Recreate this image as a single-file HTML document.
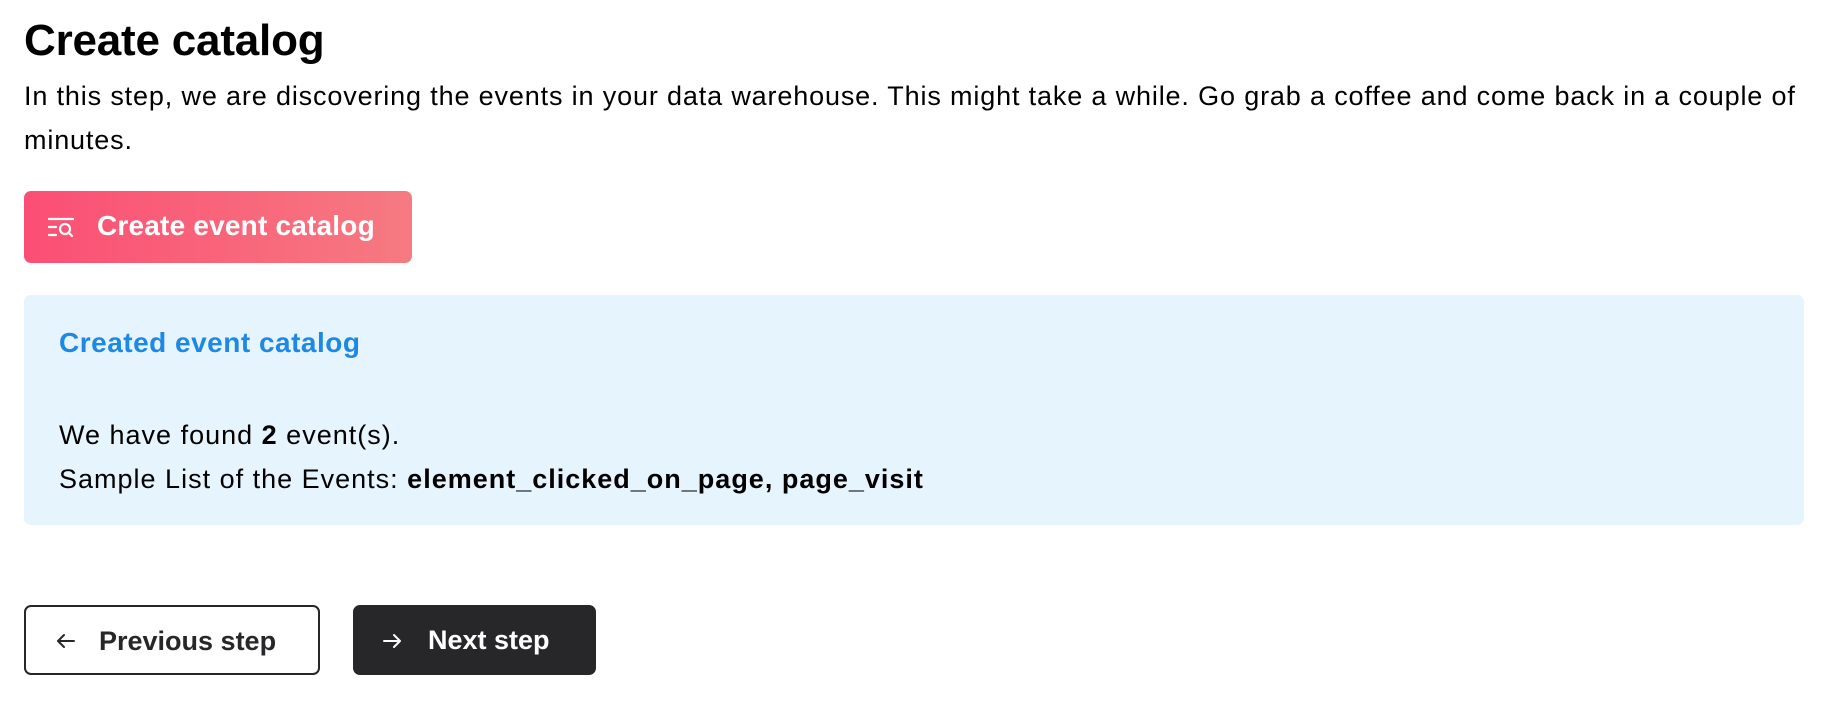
<!DOCTYPE html>
<html><head><meta charset="utf-8"><style>
*{box-sizing:border-box;margin:0;padding:0}
body{width:1848px;height:726px;background:#fff;font-family:"Liberation Sans",Arial,sans-serif;color:#000;position:relative;overflow:hidden}
.abs{position:absolute}
h1{position:absolute;left:24px;top:16px;font-size:44px;font-weight:bold;line-height:50px;letter-spacing:-0.2px}
.p{left:24px;top:74px;width:1800px;font-size:27px;line-height:44px;letter-spacing:0.85px}
.btn{position:absolute;border-radius:7px;display:flex;align-items:center;font-weight:bold;font-size:27px}
.create{left:24px;top:191px;width:388px;height:72px;background:linear-gradient(90deg,#fb4e74,#f67a81);color:#fff}
.box{left:24px;top:295px;width:1780px;height:230px;background:#e6f4fd;border-radius:7px}
.prev{left:24px;top:605px;width:296px;height:70px;border:2px solid #27272a;color:#27272a;background:#fff}
.next{left:353px;top:605px;width:243px;height:70px;background:#27272a;color:#fff}
</style></head><body>
<h1>Create catalog</h1>
<div class="abs p">In this step, we are discovering the events in your data warehouse. This might take a while. Go grab a coffee and come back in a couple of minutes.</div>
<div class="btn create">
<svg class="abs" style="left:24px;top:24px" width="28" height="26" viewBox="0 0 28 26" fill="none" stroke="#fff" stroke-width="2.2" stroke-linecap="round"><path d="M1 4H25M1 12H8M1 20H8"/><circle cx="17" cy="14" r="5"/><path d="M21 18L24 21"/></svg>
<span class="abs" style="left:73px;top:18px;line-height:34px;font-size:28px;letter-spacing:0.2px">Create event catalog</span></div>
<div class="abs box">
<div class="abs" style="left:35px;top:32px;font-size:28px;letter-spacing:0.5px;font-weight:bold;color:#1e88e5">Created event catalog</div>
<div class="abs" style="left:35px;top:118px;font-size:27px;letter-spacing:1px;line-height:44px;color:#000">We have found <b>2</b> event(s).<br>Sample List of the Events: <b>element_clicked_on_page, page_visit</b></div>
</div>
<div class="btn prev">
<svg class="abs" style="left:30px;top:26px" width="20" height="16" viewBox="0 0 20 16" fill="none" stroke="#27272a" stroke-width="2" stroke-linecap="round" stroke-linejoin="round"><path d="M18 8H2M8 2L2 8L8 14"/></svg>
<span class="abs" style="left:73px;top:17px;line-height:34px">Previous step</span></div>
<div class="btn next">
<svg class="abs" style="left:29px;top:28px" width="20" height="16" viewBox="0 0 20 16" fill="none" stroke="#fff" stroke-width="2" stroke-linecap="round" stroke-linejoin="round"><path d="M2 8H18M12 2L18 8L12 14"/></svg>
<span class="abs" style="left:75px;top:18px;line-height:34px">Next step</span></div>
</body></html>
